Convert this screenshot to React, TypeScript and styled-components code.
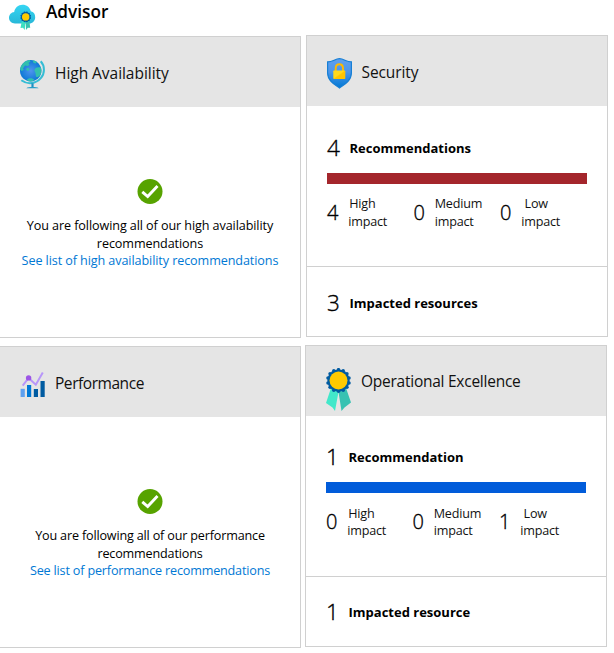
import React from 'react';
import styled, { createGlobalStyle } from 'styled-components';

const GlobalStyle = createGlobalStyle`
  * { box-sizing: border-box; }
  body {
    margin: 0;
    background: #fff;
    color: #000;
    font-family: 'Open Sans', 'Noto Sans', sans-serif;
    font-size: 12.6px;
  }
`;

const Page = styled.main`
  width: 614px;
  height: 653px;
  overflow: hidden;
`;

const TitleBar = styled.header`
  display: flex;
  height: 35px;
  padding: 4px 0 0 9px;
  gap: 10px;
`;

const Title = styled.h1`
  margin: -4px 0 0;
  font-size: 17.2px;
  line-height: 23px;
  font-weight: 600;
`;

const Columns = styled.div`
  display: flex;
  gap: 4px;
`;

const Column = styled.div<{ $top?: number }>`
  display: flex;
  flex-direction: column;
  gap: 8px;
  padding-top: ${(p) => p.$top ?? 0}px;
`;

const Card = styled.section<{ $openLeft?: boolean; $indent?: number }>`
  width: ${(p) => (p.$openLeft ? 301 : 302)}px;
  height: 302px;
  margin-left: ${(p) => p.$indent ?? 0}px;
  border: 1px solid #d0d0d0;
  ${(p) => p.$openLeft && 'border-left: 0;'}
`;

const CardHeader = styled.div<{ $top: number; $gap: number }>`
  display: flex;
  align-items: flex-start;
  height: 70px;
  padding: ${(p) => p.$top}px 0 0 20px;
  gap: ${(p) => p.$gap}px;
  background: #e5e5e5;
`;

const CardTitle = styled.h2<{ $tracking: number; $top: number }>`
  margin: ${(p) => p.$top}px 0 0;
  font-size: 15.5px;
  line-height: 22px;
  font-weight: 400;
  letter-spacing: ${(p) => p.$tracking}px;
  color: #111;
`;

const Status = styled.div`
  display: flex;
  flex-direction: column;
  align-items: center;
  padding-top: 72px;
  gap: 12px;
`;

const StatusText = styled.p<{ $tracking: number }>`
  margin: 0;
  text-align: center;
  line-height: 17.5px;
  letter-spacing: ${(p) => p.$tracking}px;
`;

const StatusLink = styled.a`
  color: #0078d4;
  text-decoration: none;
`;

const Summary = styled.div<{ $top: number }>`
  height: 161px;
  padding: ${(p) => p.$top}px 20px 0 20px;
  border-bottom: 1px solid #d0d0d0;
`;

const Resources = styled.div<{ $top: number }>`
  padding: ${(p) => p.$top}px 20px 0;
`;

const Metric = styled.div`
  display: flex;
  align-items: center;
  height: 30px;
  line-height: 30px;
`;

const Count = styled.span`
  flex: 0 0 22.5px;
  font-size: 22.5px;
  font-weight: 300;
  -webkit-text-stroke: 0.35px #000;
`;

const MetricLabel = styled.strong`
  font-size: 13px;
  font-weight: 700;
`;

const ImpactBar = styled.div<{ $color: string }>`
  height: 11px;
  margin-top: 10px;
  background: ${(p) => p.$color};
`;

const Impacts = styled.div<{ $top: number }>`
  display: grid;
  grid-template-columns: 86.5px 86.5px 1fr;
  padding-top: ${(p) => p.$top}px;
`;

const Impact = styled.div`
  display: flex;
`;

const ImpactCount = styled.span<{ $top: number }>`
  width: 21.2px;
  padding-top: ${(p) => p.$top}px;
  font-size: 20px;
  line-height: 26px;
  font-weight: 300;
  -webkit-text-stroke: 0.35px #000;
`;

const ImpactLabel = styled.div<{ $line: number }>`
  display: flex;
  flex-direction: column;
  line-height: ${(p) => p.$line}px;
  letter-spacing: -0.18px;
  color: #111;
`;

const Level = styled.span<{ $indent: number }>`
  padding-left: ${(p) => p.$indent}px;
`;

const Icon = styled.svg`
  display: block;
  flex: none;
`;

const rosette = (cx: number, cy: number, r: number, bump: number, n = 12) =>
  Array.from({ length: n }, (_, i) => {
    const a = ((i + 0.5) * 2 * Math.PI) / n;
    return <circle key={i} cx={cx + r * Math.cos(a)} cy={cy + r * Math.sin(a)} r={bump} fill="#005ba1" />;
  });

const CloudIcon = () => (
  <Icon width="27" height="27" viewBox="0 0 27 27">
    <defs>
      <linearGradient id="cloud" x1="0" y1="1" x2="0" y2="0">
        <stop offset="0" stopColor="#28b8d8" />
        <stop offset="1" stopColor="#35d5f3" />
      </linearGradient>
    </defs>
    <path d="M6 19.5C2.600 19.500 0 17 0 13.800C0 10.700 2.300 8.300 5.200 8C5.700 4 9.200.8 13.500.8C17.600.8 21 3.500 21.800 7.300C24.700 7.700 26.200 10.300 26.200 13.200C26.200 16.800 23.500 19.500 20.200 19.500Z" fill="url(#cloud)" />
    <path d="M12.800 17L16.500 18.500L15.700 26L14 23.700L11.500 23.900Z" fill="#3edfc2" />
    <path d="M20.400 17L16.700 18.500L17 26L18.800 23.700L21.200 23.800Z" fill="#38c2af" />
    {rosette(16.7, 12.9, 4.35, 1.1)}
    <circle cx="16.700" cy="12.900" r="4.700" fill="#005ba1" />
    <circle cx="16.700" cy="12.900" r="3.700" fill="#ffca00" />
  </Icon>
);

const GlobeIcon = () => (
  <Icon width="26" height="30" viewBox="0 0 26 30">
    <defs>
      <radialGradient id="globe">
        <stop offset="0" stopColor="#5094ed" />
        <stop offset="1" stopColor="#0c78d6" />
      </radialGradient>
      <clipPath id="globeClip"><circle cx="10.700" cy="11.700" r="10.700" /></clipPath>
    </defs>
    <circle cx="10.700" cy="11.700" r="10.700" fill="url(#globe)" />
    <g clipPath="url(#globeClip)" fill="#32bfae">
      <path d="M4 3L9.500 0L10.500 2.500L8.500 4L9.500 6L7.500 7L5 6.500L3 9.500L3.800 11L1.500 12L-1 9Z" />
      <path d="M14.500 12C14 9 17 7.500 22 8.500L22 14C20 15.500 19.500 18.500 16.500 18C15 16.500 16.500 15 14.500 12Z" />
      <path d="M12.500 1L17 2L16 4.500L13.500 4Z" />
      <path d="M7 20.500C9 18.500 13 18.800 14.500 21L11 23L8 22.500Z" />
      <circle cx="7.800" cy="10.200" r="1.500" />
    </g>
    <path d="M20.700 2.300C25 7 25 14.300 20.800 19.200C15.800 25 7.300 25.700 1.300 21.200" fill="none" stroke="#35bdd5" strokeWidth="2" />
    <path d="M12.500 24.200V28" stroke="#1c91c4" strokeWidth="2.200" />
    <path d="M6.300 29.200C7.500 27.900 10 27.900 12.500 27.900C15 27.900 17.500 27.900 18.700 29.200Z" fill="#249dc8" />
  </Icon>
);

const ShieldIcon = () => (
  <Icon width="25" height="31" viewBox="0 0 25 31">
    <defs>
      <linearGradient id="shield" x1="0" y1="0" x2="0" y2="1">
        <stop offset="0" stopColor="#5ea0ef" />
        <stop offset=".45" stopColor="#4d96e9" />
        <stop offset="1" stopColor="#0078d4" />
      </linearGradient>
      <linearGradient id="lock" x1="0" y1="0" x2="1" y2="1">
        <stop offset=".45" stopColor="#ffd91e" />
        <stop offset=".55" stopColor="#ffc400" />
      </linearGradient>
    </defs>
    <path d="M.6 3.900C6 3.900 8 .7 12.500.7C17 .7 19 3.900 24.400 3.900V15C24.400 23 16.500 27 12.500 30C8.500 27 .6 23 .6 15Z" fill="url(#shield)" stroke="#167fd5" strokeWidth="1.200" />
    <path d="M8.700 13V10.200C8.700 5 16 5 16 10.200V13" fill="none" stroke="#ffb900" strokeWidth="1.900" />
    <rect x="6.300" y="12.500" width="12" height="8.500" rx=".7" fill="url(#lock)" />
  </Icon>
);

const ChartIcon = () => (
  <Icon width="26" height="26" viewBox="0 0 26 26">
    <path d="M.6 16.800H4.800V25H.6Z" fill="#5ea0ef" />
    <path d="M7 13H11.200V25H7Z" fill="#0078d4" />
    <path d="M13.800 17H18V25H13.800Z" fill="#005ba1" />
    <path d="M20.500 9H24.700V25H20.500Z" fill="#005ba1" />
    <path d="M2.700 13.600L8.600 6L15.800 12.700L22.800.6" fill="none" stroke="#b796f9" strokeWidth="2" />
    <circle cx="8.600" cy="5.900" r="2.700" fill="#9c55e6" />
  </Icon>
);

const RibbonIcon = () => (
  <Icon width="25" height="43" viewBox="0 0 25 43">
    <path d="M5 20L12.500 24L9 43L6.500 39.500L0 35Z" fill="#42e8ca" />
    <path d="M20 20L12.500 24L15.500 43L18.500 39.500L25 34.500Z" fill="#38c2b2" />
    {rosette(12.5, 12.5, 10.8, 1.75, 14)}
    <circle cx="12.500" cy="12.500" r="11.100" fill="#005ba1" />
    <circle cx="12.500" cy="12.500" r="9" fill="#ffca00" />
  </Icon>
);

const CheckIcon = () => (
  <Icon width="26" height="26" viewBox="0 0 26 26">
    <circle cx="13" cy="12.500" r="12.500" fill="#57a300" />
    <path d="M5.300 12.800L10.700 17.600L20.500 7.100" fill="none" stroke="#fff" strokeWidth="2.900" />
  </Icon>
);

type LevelItem = { count: number; label: string; indent: number };

const levels = (high: number, medium: number, low: number): LevelItem[] => [
  { count: high, label: 'High', indent: 1 },
  { count: medium, label: 'Medium', indent: 0 },
  { count: low, label: 'Low', indent: 3.3 },
];

const ImpactRow = ({ items, top, numberTop, line }: { items: LevelItem[]; top: number; numberTop: number; line: number }) => (
  <Impacts $top={top}>
    {items.map((item) => (
      <Impact key={item.label}>
        <ImpactCount $top={numberTop}>{item.count}</ImpactCount>
        <ImpactLabel $line={line}>
          <Level $indent={item.indent}>{item.label}</Level>
          <span>impact</span>
        </ImpactLabel>
      </Impact>
    ))}
  </Impacts>
);

export default function App() {
  return (
    <Page>
      <GlobalStyle />
      <TitleBar>
        <CloudIcon />
        <Title>Advisor</Title>
      </TitleBar>
      <Columns>
        <Column $top={1}>
          <Card $openLeft>
            <CardHeader $top={22} $gap={9}>
              <GlobeIcon />
              <CardTitle $tracking={-0.04} $top={3}>High Availability</CardTitle>
            </CardHeader>
            <Status>
              <CheckIcon />
              <StatusText $tracking={-0.09}>
                You are following all of our high availability<br />
                recommendations<br />
                <StatusLink>See list of high availability recommendations</StatusLink>
              </StatusText>
            </Status>
          </Card>
          <Card $openLeft>
            <CardHeader $top={25} $gap={9}>
              <ChartIcon />
              <CardTitle $tracking={-0.45} $top={0}>Performance</CardTitle>
            </CardHeader>
            <Status>
              <CheckIcon />
              <StatusText $tracking={-0.17}>
                You are following all of our performance<br />
                recommendations<br />
                <StatusLink>See list of performance recommendations</StatusLink>
              </StatusText>
            </Status>
          </Card>
        </Column>
        <Column>
          <Card $indent={1}>
            <CardHeader $top={22} $gap={9.5}>
              <ShieldIcon />
              <CardTitle $tracking={-0.1} $top={3}>Security</CardTitle>
            </CardHeader>
            <Summary $top={27}>
              <Metric>
                <Count>4</Count>
                <MetricLabel>Recommendations</MetricLabel>
              </Metric>
              <ImpactBar $color="#a4262c" />
              <ImpactRow items={levels(4, 0, 0)} top={11} numberTop={5} line={18} />
            </Summary>
            <Resources $top={21}>
              <Metric>
                <Count>3</Count>
                <MetricLabel>Impacted resources</MetricLabel>
              </Metric>
            </Resources>
          </Card>
          <Card>
            <CardHeader $top={22} $gap={10}>
              <RibbonIcon />
              <CardTitle $tracking={-0.25} $top={2}>Operational Excellence</CardTitle>
            </CardHeader>
            <Summary $top={26}>
              <Metric>
                <Count>1</Count>
                <MetricLabel>Recommendation</MetricLabel>
              </Metric>
              <ImpactBar $color="#015cda" />
              <ImpactRow items={levels(0, 0, 1)} top={12} numberTop={4} line={17.2} />
            </Summary>
            <Resources $top={20}>
              <Metric>
                <Count>1</Count>
                <MetricLabel>Impacted resource</MetricLabel>
              </Metric>
            </Resources>
          </Card>
        </Column>
      </Columns>
    </Page>
  );
}
